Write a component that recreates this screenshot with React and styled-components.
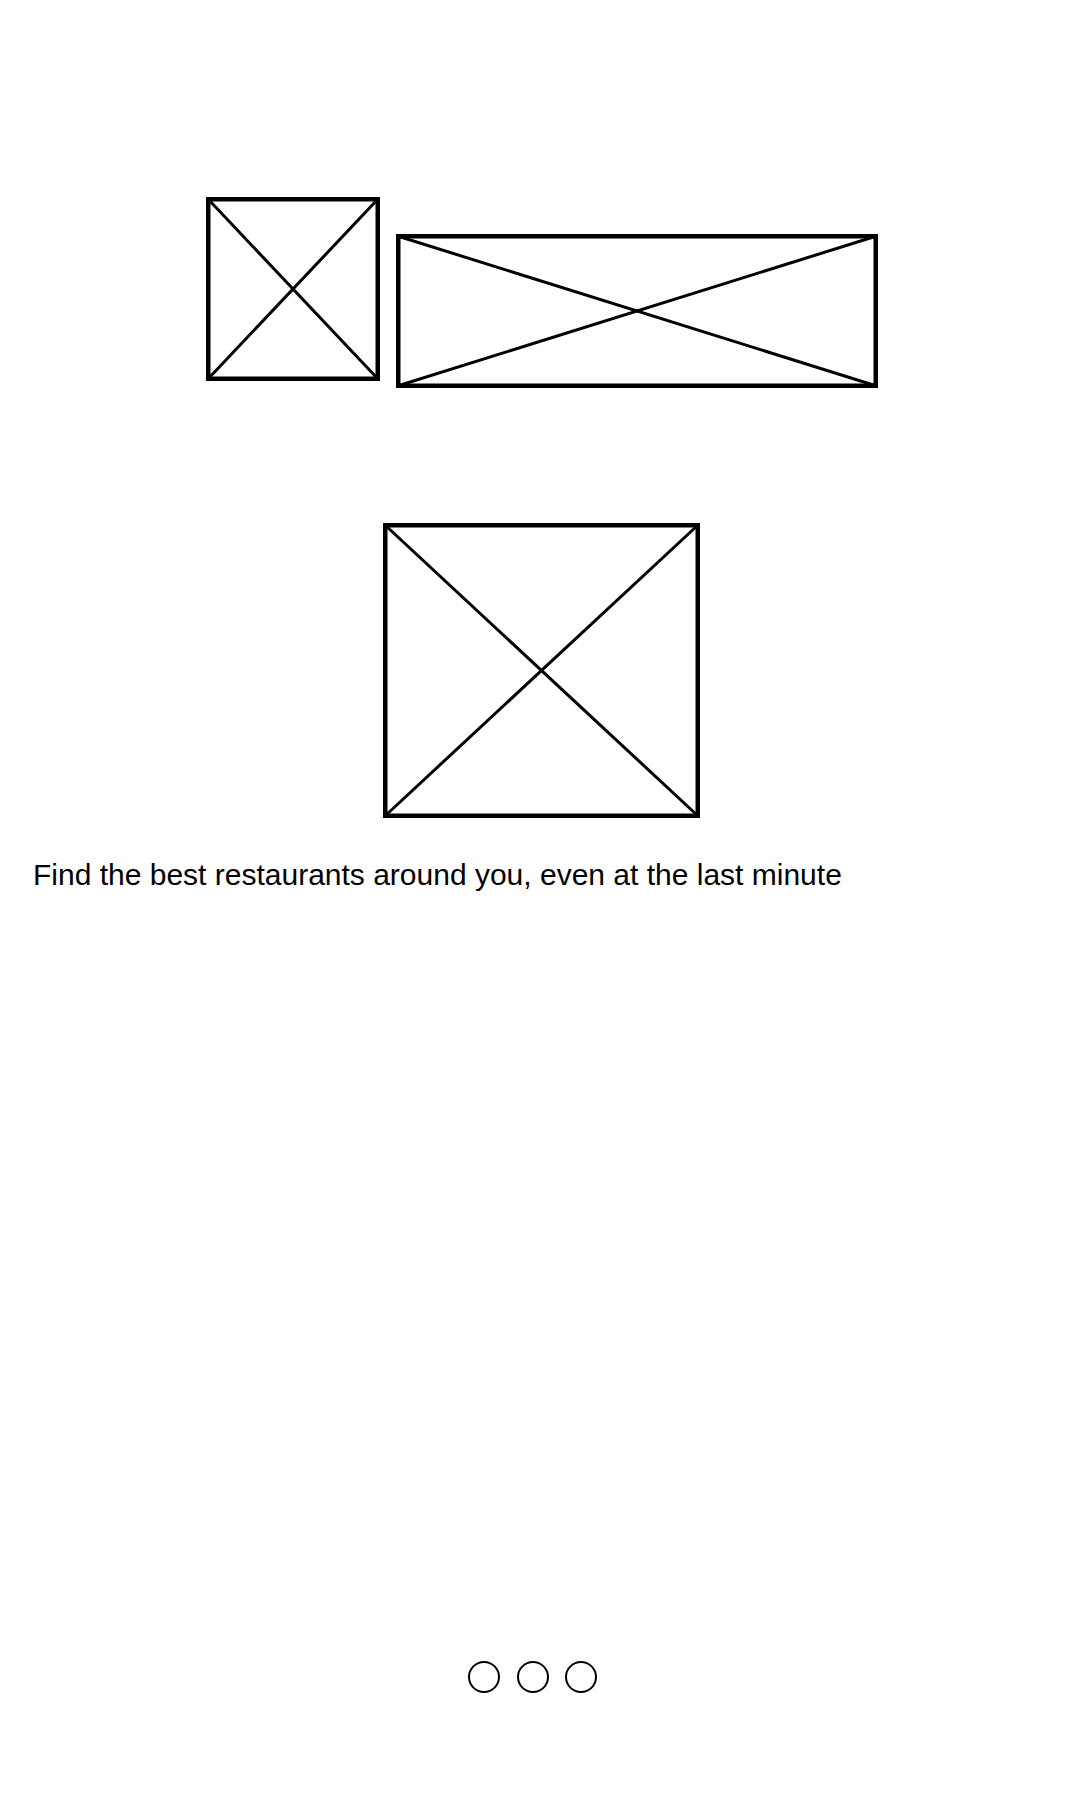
import React from "react";
import styled, { createGlobalStyle } from "styled-components";

const Global = createGlobalStyle`
  html, body { margin: 0; padding: 0; background: #ffffff; }
  body { font-family: "Liberation Sans", Arial, sans-serif; color: #000; }
`;

const Page = styled.main`
  width: 1080px;
  min-height: 1800px;
  box-sizing: border-box;
  padding-top: 197px;
  display: flex;
  flex-direction: column;
`;

const LogoRow = styled.div`
  display: flex;
  justify-content: center;
  align-items: flex-start;
  gap: 16px;
  padding-left: 4px;
`;

const Frame = styled.svg`
  display: block;
  flex: none;
  width: ${(p) => p.$w}px;
  height: ${(p) => p.$h}px;
  margin-top: ${(p) => p.$top || 0}px;
  overflow: visible;
`;

const HeroRow = styled.div`
  display: flex;
  justify-content: center;
  margin-top: 135px;
  padding-left: 3px;
`;

const Tagline = styled.p`
  margin: 40px 0 0;
  padding-left: 33px;
  font-size: 30px;
  line-height: 34px;
  font-weight: 400;
  letter-spacing: 0;
`;

const Dots = styled.div`
  display: flex;
  justify-content: center;
  gap: 16.5px;
  margin-top: 769px;
  padding-right: 15px;
`;

const Dot = styled.span`
  display: block;
  width: 32px;
  height: 32px;
  box-sizing: border-box;
  border: 2.7px solid #000;
  border-radius: 50%;
`;

function Placeholder({ w, h, top }) {
  const s = 4.5;
  return (
    <Frame $w={w} $h={h} $top={top} viewBox={`0 0 ${w} ${h}`}>
      <rect x={s / 2} y={s / 2} width={w - s} height={h - s} fill="none" stroke="#000" strokeWidth={s} />
      <line x1={s / 2} y1={s / 2} x2={w - s / 2} y2={h - s / 2} stroke="#000" strokeWidth="3" />
      <line x1={w - s / 2} y1={s / 2} x2={s / 2} y2={h - s / 2} stroke="#000" strokeWidth="3" />
    </Frame>
  );
}

export default function App() {
  return (
    <>
      <Global />
      <Page>
        <LogoRow>
          <Placeholder w={174} h={184} />
          <Placeholder w={482} h={154} top={37} />
        </LogoRow>
        <HeroRow>
          <Placeholder w={317} h={295} />
        </HeroRow>
        <Tagline>Find the best restaurants around you, even at the last minute</Tagline>
        <Dots>
          <Dot />
          <Dot />
          <Dot />
        </Dots>
      </Page>
    </>
  );
}
